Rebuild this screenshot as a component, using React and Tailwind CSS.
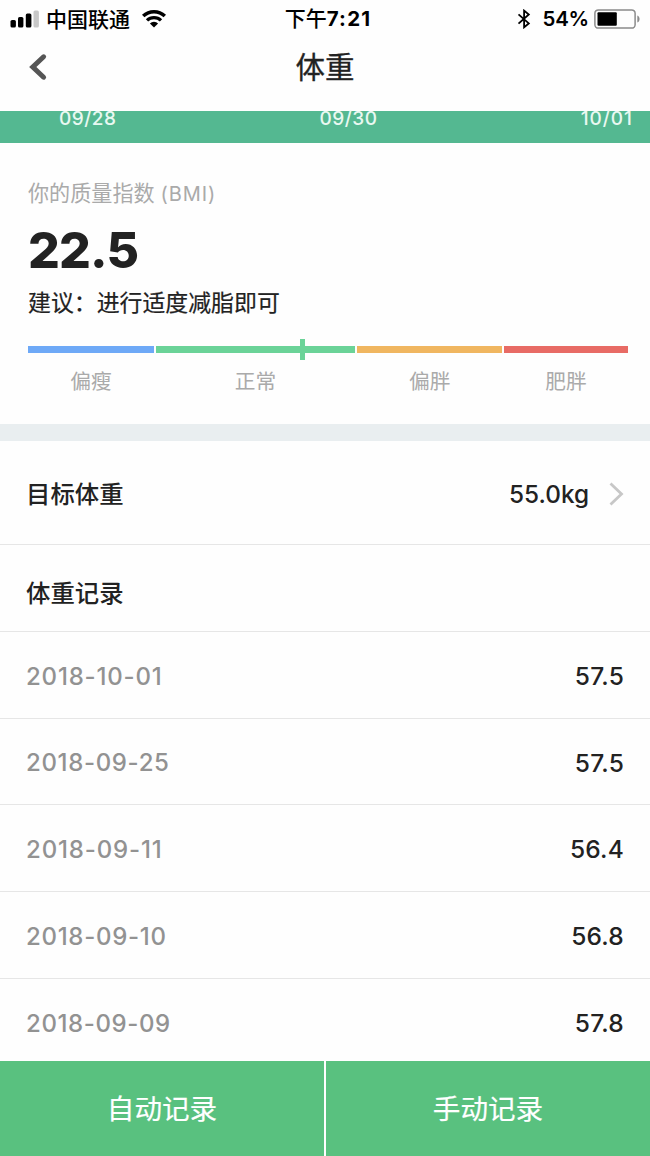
const records = [
  { date: "2018-10-01", value: "57.5", height: "h-[87px]", tracking: "tracking-[0.8px]" },
  { date: "2018-09-25", value: "57.5", height: "h-[86px]", tracking: "tracking-[0.65px]" },
  { date: "2018-09-11", value: "56.4", height: "h-[87px]", tracking: "tracking-[0.85px]" },
  { date: "2018-09-10", value: "56.8", height: "h-[87px]", tracking: "tracking-[0.7px]" },
  { date: "2018-09-09", value: "57.8", height: "h-[87px]", tracking: "tracking-[0.6px]" },
];

const chartDates = [
  { label: "09/28", tracking: "tracking-[0.5px]" },
  { label: "09/30", tracking: "tracking-[0.5px]" },
  { label: "10/01", tracking: "tracking-[1px]" },
];

const ranges = [
  { label: "偏瘦", width: "w-[126px]", color: "bg-[#6ea9f7]" },
  { label: "正常", width: "w-[199px]", color: "bg-[#6bd398]" },
  { label: "偏胖", width: "w-[145.4px]", color: "bg-[#f0b660]" },
  { label: "肥胖", width: "w-[123.2px]", color: "bg-[#e86b65]" },
];

function StatusBar() {
  return (
    <div className="grid h-9 grid-cols-[1fr_auto_1fr] items-center text-black">
      <div className="flex items-center pb-px pl-[10px]">
        <svg width="29" height="18" viewBox="0 0 29 18" className="shrink-0">
          <rect x="0.5" y="10" width="5.4" height="7.5" rx="1.6" />
          <rect x="8" y="7" width="5.4" height="10.5" rx="1.6" />
          <rect x="15.8" y="3.5" width="5.6" height="14" rx="1.6" />
          <rect x="23.5" y="0.5" width="5.4" height="17" rx="1.6" fill="#c8c8c8" />
        </svg>
        <span className="ml-[7px] pt-px text-[21px] leading-9 font-medium">中国联通</span>
        <svg width="26" height="18" viewBox="0 0 26 18" className="ml-[11px] shrink-0">
          <path d="M2.2 6.1a15.6 15.6 0 0 1 21.6 0" fill="none" stroke="#000" strokeWidth="3.5" />
          <path d="M6 10.4a10 10 0 0 1 14 0" fill="none" stroke="#000" strokeWidth="3.3" />
          <path d="M8.9 13.5a5.8 5.8 0 0 1 8.2 0L13 17.5z" />
        </svg>
      </div>
      <div className="flex items-center pb-[2px] pl-[6px] leading-9">
        <span className="pt-px text-[21px] font-medium">下午</span>
        <span className="text-[20.5px] font-bold tracking-[1.2px]">7:21</span>
      </div>
      <div className="flex items-center justify-end pr-[10px] pb-[2px]">
        <svg width="14" height="20" viewBox="0 0 13 20" fill="none" stroke="#000" strokeWidth="1.8">
          <path d="M1 5.3 11.3 14.4 6.6 18.3V1.6L11.3 5.5 1 14.6" />
        </svg>
        <span className="ml-[11px] text-[20.5px] leading-9 font-semibold tracking-[-0.2px]">54%</span>
        <svg width="46" height="20" viewBox="0 0 46 20" className="ml-[5px] shrink-0">
          <rect x="0.9" y="0.9" width="40.2" height="18.2" rx="3.4" fill="none" stroke="#8b8b8b" strokeWidth="1.5" />
          <rect x="3.5" y="3.3" width="19.3" height="13.4" rx="1" />
          <path d="M43.3 6.5c3 1 3 6 0 7z" fill="#8b8b8b" />
        </svg>
      </div>
    </div>
  );
}

function NavBar() {
  return (
    <div className="grid h-[75px] grid-cols-[1fr_auto_1fr] items-center pb-[13px]">
      <svg width="20" height="28" viewBox="0 0 20 28" className="ml-[28px]" fill="none" stroke="#555" strokeWidth="5">
        <path d="M15.6 3.8 4.8 14 15.6 24.2" strokeLinecap="round" />
      </svg>
      <h1 className="text-[29.5px] leading-[40px] font-normal [-webkit-text-stroke:0.3px_#222]">体重</h1>
    </div>
  );
}

function BmiSection() {
  return (
    <section className="h-[281px] pt-[36px] pr-[22px] pl-[28px]">
      <div className="flex h-[30px] items-center text-[21.1px] leading-[30px] text-[#aaa]">
        <span>你的质量指数</span>
        <span className="ml-[6px] text-[20px] tracking-[0.9px]">(BMI)</span>
      </div>
      <div className="mt-[11px] h-[60px] text-[50px] leading-[60px] font-extrabold tracking-[-0.9px]">22.5</div>
      <div className="mt-[6px] h-[34px] text-[22.9px] leading-[34px] [-webkit-text-stroke:0.2px_#222]">
        建议：进行适度减脂即可
      </div>
      <div className="mt-[19px] flex h-[20px] gap-[2px]">
        {ranges.map((range) => (
          <div key={range.label} className={`relative flex items-center ${range.width}`}>
            <div className={`h-[7px] w-full ${range.color}`} />
            {range.label === "正常" && (
              <div className="absolute top-0 left-[144px] h-[21px] w-[5px] bg-[#6bd398]" />
            )}
          </div>
        ))}
      </div>
      <div className="mt-[7px] flex gap-[2px] text-center text-[20.7px] leading-[32px] text-[#aaa]">
        {ranges.map((range) => (
          <span key={range.label} className={range.width}>{range.label}</span>
        ))}
      </div>
    </section>
  );
}

export default function App() {
  return (
    <div className="flex h-[1156px] w-[650px] flex-col overflow-hidden bg-[#fefefe] font-['Inter','Noto_Sans_CJK_SC',sans-serif] text-[#222]">
      <StatusBar />
      <NavBar />
      <div className="flex h-[32px] justify-between bg-[#54b891] pr-[17px] pl-[59px] text-[19px] leading-[15px] font-medium text-[#e9f8f1]">
        {chartDates.map((date) => (
          <span key={date.label} className={date.tracking}>{date.label}</span>
        ))}
      </div>
      <BmiSection />
      <div className="h-[17px] bg-[#e9eef0]" />
      <div className="flex h-[104px] items-center border-b border-[#e6e6e6] pt-[3px] pr-[26px] pl-[26px]">
        <span className="pt-px text-[24.4px] font-medium">目标体重</span>
        <span className="ml-auto pt-px text-[24.3px] font-medium">55.0kg</span>
        <svg width="15" height="24" viewBox="0 0 15 24" className="ml-[20px]" fill="none" stroke="#c7c7c7" strokeWidth="2.8">
          <path d="M1.5 1.5 12.5 12 1.5 22.5" />
        </svg>
      </div>
      <div className="flex h-[87px] items-center border-b border-[#e6e6e6] px-[26px] pt-[11px]">
        <h2 className="text-[24.4px] font-medium">体重记录</h2>
      </div>
      <div className="h-[429px] overflow-hidden">
        {records.map((record) => (
          <div
            key={record.date}
            className={`flex items-center justify-between border-b border-[#e6e6e6] pt-[3px] pr-[26px] pl-[26px] ${record.height}`}
          >
            <span className={`text-[24px] font-medium text-[#929292] ${record.tracking}`}>{record.date}</span>
            <span className="text-[24.5px] font-medium tracking-[0.2px]">{record.value}</span>
          </div>
        ))}
      </div>
      <div className="flex h-[95px] gap-[2px] text-[27.6px] text-white [-webkit-text-stroke:0.2px_white]">
        <button className="w-[324px] bg-[#59c17f] pt-[2px]">自动记录</button>
        <button className="w-[324px] bg-[#59c17f] pt-[2px]">手动记录</button>
      </div>
    </div>
  );
}
